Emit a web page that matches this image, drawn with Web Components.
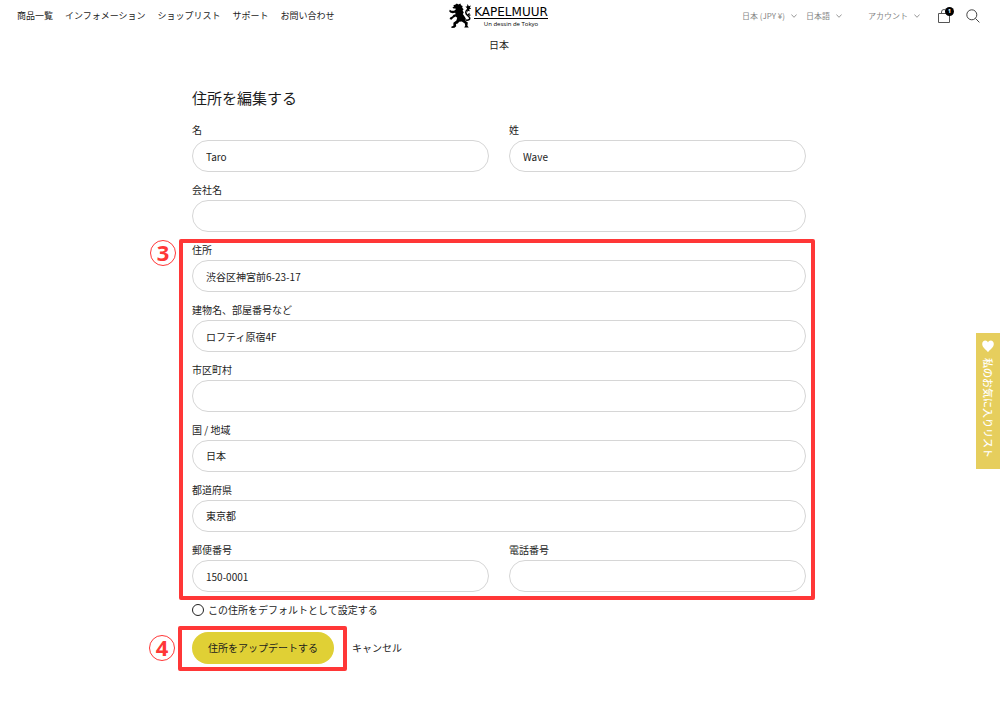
<!DOCTYPE html>
<html lang="ja">
<head>
<meta charset="utf-8">
<meta name="viewport" content="width=device-width, initial-scale=1">
<title>住所を編集する - KAPELMUUR</title>
<style>
  body { margin: 0; background: #fff; color: #1c1c1c; font-family: "Noto Sans CJK JP", "Noto Sans", sans-serif; font-size: 10px; line-height: 20px; --accent: #e0d035; --mark: #ff3737; --line: #d6d6d6; }
</style>
</head>
<body>
<account-page></account-page>
<script>
const define = (name, html, setup) => {
  const template = document.createElement('template');
  template.innerHTML = html;
  customElements.define(name, class extends HTMLElement {
    constructor() {
      super();
      this.attachShadow({ mode: 'open' }).append(template.content.cloneNode(true));
    }
    connectedCallback() { if (setup) setup(this, this.shadowRoot); }
  });
};

define('nav-link', `
  <style>
    :host { display: block; white-space: nowrap; }
    a { color: inherit; text-decoration: none; }
  </style>
  <a href="#"><slot></slot></a>`);

define('menu-button', `
  <style>
    :host { display: block; white-space: nowrap; }
    button { display: flex; align-items: center; gap: 6px; border: 0; padding: 0; background: none; color: #858585; font: inherit; font-size: 8px; line-height: 20px; }
    svg { display: block; width: 6px; height: 4px; fill: none; stroke: #999; }
  </style>
  <button type="button"><span><slot></slot></span><svg viewBox="0 0 6 4" aria-hidden="true"><path d="M.4.5 3 3.3 5.6.5"/></svg></button>`);

define('brand-logo', `
  <style>
    :host { display: block; }
    a { display: flex; gap: 2px; color: #000; text-decoration: none; }
    svg { display: block; width: 23px; height: 26px; }
    .words { display: flex; flex-direction: column; align-items: center; padding-top: 3px; }
    .name { font: 12px/12px "DejaVu Sans", sans-serif; border-bottom: 1px solid #000; }
    .sub { font: 6px/10px "Open Sans", sans-serif; white-space: nowrap; }
  </style>
  <a href="#">
    <svg viewBox="0 0 23 26" aria-hidden="true">
      <path d="M4.400 2.200 6.600 1.600 7.800.4 9.400 1.400 11.400.6 12 2.200 13.600 3 13.200 4.800 14.600 6.200 13.600 7.600 14.800 9.400 13.800 11 15.400 13.200 16.800 15.600 16.400 17.800 18.800 19.600 18.400 22.800 19.800 24.400 15.200 24.400 16.200 22.800 15.800 20.600 12.800 18.600 10.200 18.800 8.800 20.600 7 21 7.200 23.200 5.600 24.800 2.600 25 2.200 23.800 4.400 22.800 4.400 19.800 7.400 17.600 8.200 14.800 6.600 13.600 4.400 14.800 2.400 16.800.6 16 1.200 14.400 3.200 13.400 4.600 11.800 6.600 11.200 6.200 9.800 3.600 10.200 1.200 9.600.2 8.200.8 6.800 2.400 7.800 5 7.800 6.600 6.800 6.600 5.400 4.600 5.600 3.400 4.600 5 3.600Z"/>
      <path d="M16.600 17c3.200.6 4.800-.8 3.800-2.600s-4-2.600-3.600-5.400 3.200-2 2-5" fill="none" stroke="#000" stroke-width="1.500"/>
      <path d="m18.200 5.600-1.800-2.200 1.600.2.600-2.600 1.200 2.200 2.200-.8-1.200 2.200 1.400 1-2.200.8 1 1.800-2-.2-.8 1.800ZM18.400 11.200l2.400-1.400-.4 1.600 1.800.6-2.200 1Z"/>
    </svg>
    <span class="words"><span class="name">KAPELMUUR</span><span class="sub">Un dessin de Tokyo</span></span>
  </a>`);

define('cart-button', `
  <style>
    :host { display: block; }
    button { display: block; position: relative; border: 0; padding: 0; background: none; color: #fff; }
    svg { display: block; width: 14px; height: 16px; fill: none; stroke: #555; }
    span { position: absolute; top: -1px; right: -3px; width: 9px; height: 9px; border-radius: 50%; background: #000; font: bold 6px/9px "Noto Sans", sans-serif; text-align: center; }
  </style>
  <button type="button" aria-label="カート">
    <svg viewBox="0 0 14 16" aria-hidden="true"><path d="M1.500 5.500h11v9h-11zM4.500 5.500V4a2.500 2.500 0 0 1 5 0v1.500"/></svg>
    <span><slot></slot></span>
  </button>`);

define('search-button', `
  <style>
    :host { display: block; }
    button { display: block; border: 0; padding: 0; background: none; }
    svg { display: block; width: 14px; height: 14px; fill: none; stroke: #444; }
  </style>
  <button type="button" aria-label="検索"><svg viewBox="0 0 14 14" aria-hidden="true"><circle cx="5.800" cy="5.800" r="5"/><path d="m9.400 9.400 4 4"/></svg></button>`);

define('site-header', `
  <style>
    :host { display: grid; grid-template-columns: 1fr auto 1fr; align-items: start; padding: 3px 20px 0 17px; }
    nav, .tools { display: flex; align-items: center; height: 26px; }
    nav { gap: 12px; font-size: 9px; }
    nav, brand-logo { min-width: 0; }
    .tools { justify-content: flex-end; }
    .locale { display: flex; gap: 9px; margin-right: 26px; }
    cart-button { margin: 0 15px 0 17px; }
  </style>
  <nav aria-label="メイン">
    <nav-link>商品一覧</nav-link><nav-link>インフォメーション</nav-link><nav-link>ショップリスト</nav-link><nav-link>サポート</nav-link><nav-link>お問い合わせ</nav-link>
  </nav>
  <brand-logo></brand-logo>
  <div class="tools">
    <div class="locale"><menu-button>日本 (JPY ¥)</menu-button><menu-button>日本語</menu-button></div>
    <menu-button>アカウント</menu-button>
    <cart-button>1</cart-button>
    <search-button></search-button>
  </div>`);

define('form-field', `
  <style>
    :host { display: block; min-width: 0; }
    :host([wide]) { grid-column: 1 / -1; }
    label { display: block; }
    input, select { display: block; box-sizing: border-box; width: 100%; height: 32px; margin: 0; padding: 0 13px; border: 1px solid var(--line); border-radius: 16px; background: #fff; color: inherit; font: inherit; appearance: none; }
  </style>
  <label for="control"></label>`, (host, root) => {
  if (root.querySelector('#control')) return;
  root.querySelector('label').textContent = host.getAttribute('label');
  const value = host.getAttribute('value') || '';
  const control = document.createElement(host.hasAttribute('choice') ? 'select' : 'input');
  control.id = 'control';
  if (control.localName === 'select') control.add(new Option(value));
  else { control.type = 'text'; control.value = value; }
  root.append(control);
});

define('step-mark', `
  <style>
    :host { display: block; position: relative; }
    .frame { position: absolute; inset: -1px -9px -8px -13px; border: 4px solid var(--mark); border-radius: 2px; pointer-events: none; }
    :host([compact]) .frame { inset: -6px -13px -7px -14px; }
    .number { position: absolute; top: 0; left: -42px; box-sizing: border-box; width: 26px; height: 26px; border: 1px solid var(--mark); border-radius: 50%; color: var(--mark); font: bold 22px/22px "Noto Sans", sans-serif; text-align: center; }
    :host([compact]) .number { top: 3px; left: -43px; }
  </style>
  <slot></slot>
  <div class="frame"></div>
  <div class="number"></div>`, (host, root) => {
  root.querySelector('.number').textContent = host.getAttribute('step');
});

define('field-grid', `
  <style>
    :host { display: grid; grid-template-columns: 1fr 1fr; gap: 8px 20px; }
  </style>
  <slot></slot>`);

define('check-option', `
  <style>
    :host { display: block; }
    label { display: flex; align-items: center; gap: 4px; }
    input { box-sizing: border-box; width: 12px; height: 12px; margin: 0; border: 1px solid #222; border-radius: 50%; appearance: none; }
    input:checked { background: #222; }
  </style>
  <label><input type="checkbox"><span><slot></slot></span></label>`);

define('submit-button', `
  <style>
    :host { display: block; }
    button { display: block; height: 32px; padding: 0 16px; border: 0; border-radius: 16px; background: var(--accent); color: inherit; font: inherit; white-space: nowrap; }
  </style>
  <button type="submit"><slot></slot></button>`);

define('address-form', `
  <style>
    :host { display: block; }
    h1 { margin: 0 0 10px; font-size: 15px; line-height: 24px; font-weight: 400; }
    form { display: flex; flex-direction: column; gap: 8px; }
    .actions { display: flex; align-items: center; gap: 18px; padding-top: 4px; }
  </style>
  <h1>住所を編集する</h1>
  <form>
    <field-grid>
      <form-field label="名" value="Taro"></form-field>
      <form-field label="姓" value="Wave"></form-field>
      <form-field wide label="会社名"></form-field>
    </field-grid>
    <step-mark step="3">
      <field-grid>
        <form-field wide label="住所" value="渋谷区神宮前6-23-17"></form-field>
        <form-field wide label="建物名、部屋番号など" value="ロフティ原宿4F"></form-field>
        <form-field wide label="市区町村"></form-field>
        <form-field wide choice label="国 / 地域" value="日本"></form-field>
        <form-field wide choice label="都道府県" value="東京都"></form-field>
        <form-field label="郵便番号" value="150-0001"></form-field>
        <form-field label="電話番号"></form-field>
      </field-grid>
    </step-mark>
    <check-option>この住所をデフォルトとして設定する</check-option>
    <div class="actions">
      <step-mark compact step="4"><submit-button>住所をアップデートする</submit-button></step-mark>
      <nav-link>キャンセル</nav-link>
    </div>
  </form>`);

define('wish-tab', `
  <style>
    :host { position: fixed; top: 333px; right: 0; }
    button { display: flex; align-items: center; gap: 6px; width: 24px; height: 136px; padding: 7px 0; border: 0; background: #e6ce5d; color: #fff; font: inherit; font-weight: 500; line-height: 24px; writing-mode: vertical-rl; text-orientation: sideways; white-space: nowrap; }
    svg { display: block; width: 12px; height: 12px; fill: #fff; }
  </style>
  <button type="button"><svg viewBox="0 0 12 12" aria-hidden="true"><path d="M6 12.200C4.600 10 .2 7.600.2 4 .2 1.800 1.600.4 3.200.4 4.600.4 5.600 1.200 6 2.400 6.400 1.200 7.400.4 8.800.4c1.600 0 3 1.400 3 3.600 0 3.600-4.400 6-5.800 8.200Z"/></svg><span><slot></slot></span></button>`);

define('account-page', `
  <style>
    :host { display: block; }
    .country { margin: 6px 2px 0 0; text-align: center; }
    main { max-width: 614px; margin: 0 auto; padding: 31px 16px 48px 14px; }
  </style>
  <site-header></site-header>
  <p class="country">日本</p>
  <main><address-form></address-form></main>
  <wish-tab>私のお気に入りリスト</wish-tab>`);
</script>
</body>
</html>
